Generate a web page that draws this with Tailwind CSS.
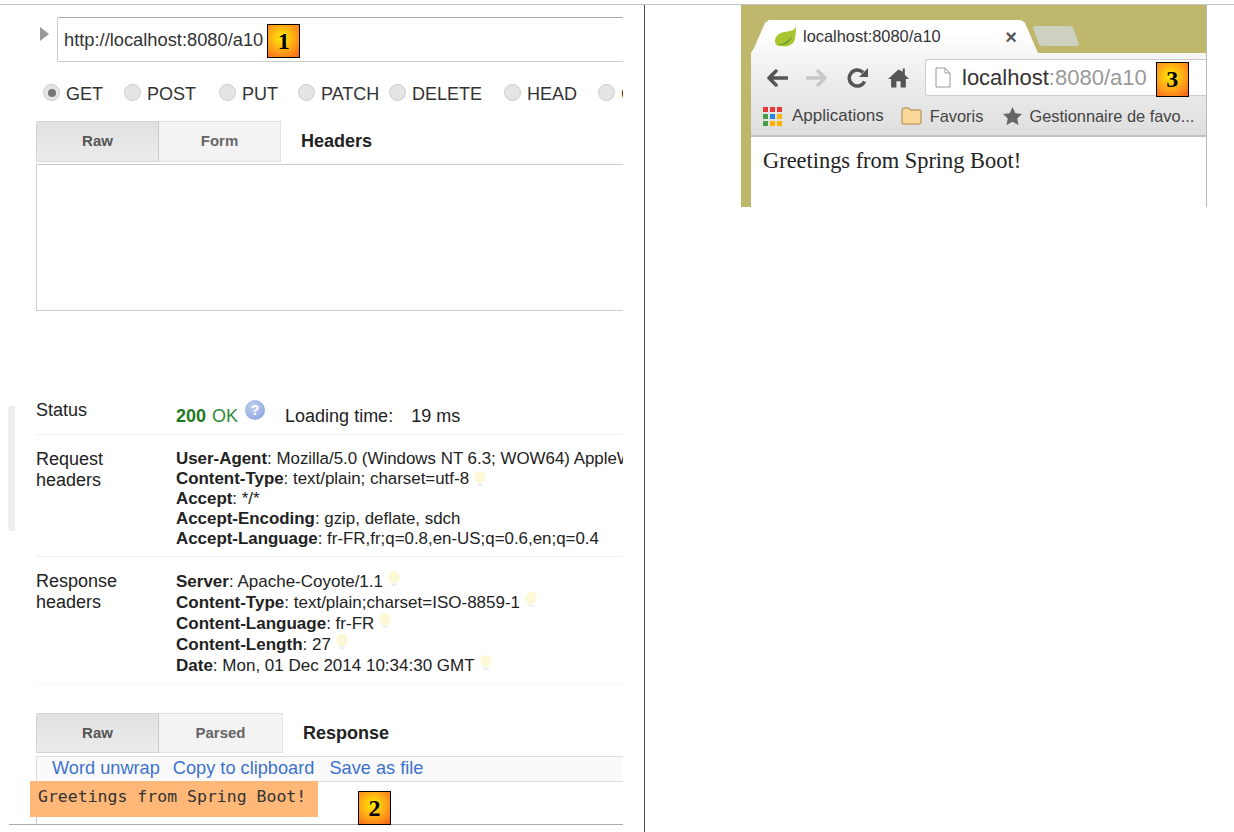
<!DOCTYPE html>
<html lang="en">
<head>
    <meta charset="UTF-8" />
    <title>Spring Boot a10</title>
    <script src="https://cdn.jsdelivr.net/npm/@tailwindcss/browser@4"></script>
</head>
<body class="bg-white h-[832px] w-[1234px] overflow-hidden font-['Liberation_Sans',sans-serif] text-[#222]">
<div class="mt-[4px] border-t border-[#c4c4c4] flex h-[828px]">

    <!-- Left column: REST client -->
    <div class="w-[645px] flex-shrink-0 border-r border-[#555] relative">
        <div class="absolute left-[8px] top-[401px] w-[7px] h-[125px] bg-[#eee] rounded-l-[3px]"></div>

        <div class="ml-[9px] w-[614px] overflow-hidden h-[820px] border-b border-[#aaa] relative">

            <!-- URL row -->
            <div class="flex items-start pl-[31px] pt-[12px]">
                <svg class="w-[9px] h-[14px] mt-[10px] flex-shrink-0" viewBox="0 0 9 14"><path d="M0 0l9 7-9 7z" fill="#999"/></svg>
                <div class="ml-[8px] h-[45px] flex-1 border border-[#ccc] border-t-[#aaa] rounded-l-[2px] flex items-center pl-[6px] -mr-2 text-[18.3px] text-[#333]">
                    <span>http://localhost:8080/a10</span>
                    <span class="ml-[4px] w-[33px] h-[34px] mt-[3px] flex-shrink-0 border border-black bg-[radial-gradient(circle_at_45%_40%,#ffee00,#ff9a1a_60%,#f0601a)] flex items-center justify-center font-['Liberation_Serif',serif] font-bold text-[24px] text-black">1</span>
                </div>
            </div>

            <!-- Method radios -->
            <div class="flex items-center h-[24px] mt-[20px] pl-[34px] text-[18px] text-[#333] whitespace-nowrap">
                <span class="w-[17px] h-[17px] -mt-[3px] flex-shrink-0 rounded-full border border-[#ccc] bg-[#e4e4e4] flex items-center justify-center"><span class="w-[8px] h-[8px] rounded-full bg-[#777]"></span></span>
                <span class="ml-[6px] w-[58px] flex-shrink-0">GET</span>
                <span class="w-[17px] h-[17px] -mt-[3px] flex-shrink-0 rounded-full border border-[#ccc] bg-[#e4e4e4]"></span>
                <span class="ml-[6px] w-[72px] flex-shrink-0">POST</span>
                <span class="w-[17px] h-[17px] -mt-[3px] flex-shrink-0 rounded-full border border-[#ccc] bg-[#e4e4e4]"></span>
                <span class="ml-[6px] w-[56px] flex-shrink-0">PUT</span>
                <span class="w-[17px] h-[17px] -mt-[3px] flex-shrink-0 rounded-full border border-[#ccc] bg-[#e4e4e4]"></span>
                <span class="ml-[6px] w-[68px] flex-shrink-0">PATCH</span>
                <span class="w-[17px] h-[17px] -mt-[3px] flex-shrink-0 rounded-full border border-[#ccc] bg-[#e4e4e4]"></span>
                <span class="ml-[6px] w-[92px] flex-shrink-0">DELETE</span>
                <span class="w-[17px] h-[17px] -mt-[3px] flex-shrink-0 rounded-full border border-[#ccc] bg-[#e4e4e4]"></span>
                <span class="ml-[6px] w-[71px] flex-shrink-0">HEAD</span>
                <span class="w-[17px] h-[17px] -mt-[3px] flex-shrink-0 rounded-full border border-[#ccc] bg-[#e4e4e4]"></span>
                <span class="ml-[6px] flex-shrink-0">OPTIONS</span>
            </div>

            <!-- Request tabs -->
            <div class="flex items-center ml-[27px] mt-[15px] h-[41px]">
                <div class="w-[123px] h-full bg-[linear-gradient(#e0e0e0,#ececec)] border border-[#d4d4d4] border-r-[#c8c8c8] rounded-l-[2px] flex items-center justify-center text-[15px] font-bold text-[#555]">Raw</div>
                <div class="w-[122px] h-full bg-[#f3f3f3] border border-[#e2e2e2] border-l-0 flex items-center justify-center text-[15px] font-bold text-[#666]">Form</div>
                <div class="ml-[20px] text-[18px] font-bold text-[#222]">Headers</div>
            </div>
            <div class="ml-[27px] mt-[2px] h-[147px] border border-[#ccc] border-r-0"></div>

            <!-- Status -->
            <div class="flex ml-[27px] mt-[88px] h-[36px] border-b border-[#f2f2f2] text-[18px]">
                <div class="w-[140px] flex-shrink-0 -mt-[2px]">Status</div>
                <div class="flex items-start pt-[4px] whitespace-nowrap">
                    <span class="font-bold text-[#1f7a1f]">200</span><span class="ml-[6px] text-[#2e8b3a]">OK</span>
                    <span class="ml-[7px] -mt-[3px] w-[20px] h-[20px] rounded-full bg-[radial-gradient(circle_at_40%_35%,#c4d0f0,#7f9bdc)] text-white text-[14px] font-bold flex items-center justify-center">?</span>
                    <span class="ml-[20px]">Loading time:</span>
                    <span class="ml-[18px]">19 ms</span>
                </div>
            </div>

            <!-- Request headers -->
            <div class="flex ml-[27px] mt-[14px] h-[108px] border-b border-[#f2f2f2]">
                <div class="w-[140px] flex-shrink-0 text-[18px] leading-[21px]">Request<br>headers</div>
                <div class="text-[16.9px] leading-[20px] whitespace-nowrap">
                    <div><b>User-Agent</b>: Mozilla/5.0 (Windows NT 6.3; WOW64) AppleWebKit/537.36</div>
                    <div class="flex items-center"><span><b>Content-Type</b>: text/plain; charset=utf-8</span><svg class="ml-[5px] w-[12px] h-[16px]" viewBox="0 0 12 16"><path d="M6 0a6 6 0 0 0-3 11v1h6v-1A6 6 0 0 0 6 0z" fill="#fdf8d6"/><path d="M3.500 12.500h5V15h-5z" fill="#eeeeee"/></svg></div>
                    <div><b>Accept</b>: */*</div>
                    <div><b>Accept-Encoding</b>: gzip, deflate, sdch</div>
                    <div><b>Accept-Language</b>: fr-FR,fr;q=0.8,en-US;q=0.6,en;q=0.4</div>
                </div>
            </div>

            <!-- Response headers -->
            <div class="flex ml-[27px] mt-[14px] h-[113px] border-b border-[#f8f8f8]">
                <div class="w-[140px] flex-shrink-0 text-[18px] leading-[21px]">Response<br>headers</div>
                <div class="text-[17px] leading-[21px] whitespace-nowrap">
                    <div class="flex items-center"><span><b>Server</b>: Apache-Coyote/1.1</span><svg class="ml-[5px] -mt-[5px] w-[12px] h-[16px]" viewBox="0 0 12 16"><path d="M6 0a6 6 0 0 0-3 11v1h6v-1A6 6 0 0 0 6 0z" fill="#fdf8d6"/><path d="M3.500 12.500h5V15h-5z" fill="#eeeeee"/></svg></div>
                    <div class="flex items-center"><span><b>Content-Type</b>: text/plain;charset=ISO-8859-1</span><svg class="ml-[5px] -mt-[5px] w-[12px] h-[16px]" viewBox="0 0 12 16"><path d="M6 0a6 6 0 0 0-3 11v1h6v-1A6 6 0 0 0 6 0z" fill="#fdf8d6"/><path d="M3.500 12.500h5V15h-5z" fill="#eeeeee"/></svg></div>
                    <div class="flex items-center"><span><b>Content-Language</b>: fr-FR</span><svg class="ml-[5px] -mt-[5px] w-[12px] h-[16px]" viewBox="0 0 12 16"><path d="M6 0a6 6 0 0 0-3 11v1h6v-1A6 6 0 0 0 6 0z" fill="#fdf8d6"/><path d="M3.500 12.500h5V15h-5z" fill="#eeeeee"/></svg></div>
                    <div class="flex items-center"><span><b>Content-Length</b>: 27</span><svg class="ml-[5px] -mt-[5px] w-[12px] h-[16px]" viewBox="0 0 12 16"><path d="M6 0a6 6 0 0 0-3 11v1h6v-1A6 6 0 0 0 6 0z" fill="#fdf8d6"/><path d="M3.500 12.500h5V15h-5z" fill="#eeeeee"/></svg></div>
                    <div class="flex items-center"><span><b>Date</b>: Mon, 01 Dec 2014 10:34:30 GMT</span><svg class="ml-[5px] -mt-[5px] w-[12px] h-[16px]" viewBox="0 0 12 16"><path d="M6 0a6 6 0 0 0-3 11v1h6v-1A6 6 0 0 0 6 0z" fill="#fdf8d6"/><path d="M3.500 12.500h5V15h-5z" fill="#eeeeee"/></svg></div>
                </div>
            </div>

            <!-- Response tabs -->
            <div class="flex items-center ml-[27px] mt-[29px] h-[40px]">
                <div class="w-[123px] h-full bg-[linear-gradient(#e0e0e0,#ececec)] border border-[#d4d4d4] border-r-[#c8c8c8] rounded-l-[2px] flex items-center justify-center text-[15px] font-bold text-[#555]">Raw</div>
                <div class="w-[124px] h-full bg-[#f3f3f3] border border-[#e2e2e2] border-l-0 flex items-center justify-center text-[15px] font-bold text-[#666]">Parsed</div>
                <div class="ml-[20px] text-[18px] font-bold text-[#222]">Response</div>
            </div>
            <div class="ml-[27px] mt-[3px] h-[26px] border border-[#ddd] border-r-0 bg-[#fafafa] flex items-center pl-[15px] text-[18.2px] text-[#3d72cc] whitespace-nowrap">
                <span>Word unwrap</span><span class="ml-[13px]">Copy to clipboard</span><span class="ml-[15px]">Save as file</span>
            </div>
            <div class="ml-[27px] h-[60px] border-l border-[#ccc]"></div>
        </div>

        <!-- Highlight and callout sit over the response body -->
        <div class="absolute left-[30px] top-[776px] w-[288px] h-[36px] bg-[#ffb877] pl-[8px] pt-[6px] font-['DejaVu_Sans_Mono',monospace] text-[16.5px] leading-[20px] text-[#333] whitespace-nowrap">Greetings from Spring Boot!</div>
        <div class="absolute left-[358px] top-[786px] w-[33px] h-[34px] border border-black bg-[radial-gradient(circle_at_45%_40%,#ffee00,#ff9a1a_60%,#f0601a)] flex items-center justify-center font-['Liberation_Serif',serif] font-bold text-[24px] text-black">2</div>
    </div>

    <!-- Right column: browser screenshot -->
    <div class="ml-[96px] w-[466px] h-[202px] bg-[#bfb86c] pl-[10px] pt-[15px] border-r border-[#bbb] overflow-hidden flex-shrink-0">
        <div class="flex items-start h-[33px]">
            <div class="w-[287px] h-full bg-[linear-gradient(#fff_40%,#f6f6f6)] [clip-path:polygon(0_100%,3px_28px,14px_3px,18px_0,270px_0,274px_3px,287px_100%)] flex items-center pl-[24px] pr-[21px] text-[16.4px] text-[#333]">
                <svg class="w-[22px] h-[21px] flex-shrink-0" viewBox="0 0 22 21"><path d="M21 0C20 5 15 5 9 6 3 7 0 11 0 15c0 3 2 5 5 5 7 1 14 0 15-8 1-4 1-8 1-12z" fill="#a9c52f"/><path d="M3 19c5-1 11-4 14-9-2 8-8 9-14 9z" fill="#5f9a33"/></svg>
                <span class="ml-[6px] flex-1">localhost:8080/a10</span>
                <span class="font-bold text-[#555] text-[20px]">×</span>
            </div>
            <div class="-ml-[2px] mt-[6px] w-[40px] h-[20px] bg-[#cdd1c2] rounded-[3px] skew-x-[20deg]"></div>
        </div>
        <div class="bg-[linear-gradient(#f6f6f6,#e8e8e8)] h-[44px] flex items-start pt-[6px] pl-[14px]">
            <div class="flex items-center h-[37px] flex-1">
                <svg class="w-[23px] h-[20px] flex-shrink-0" viewBox="0 0 23 20"><path d="M22 10H4M11 3l-7 7 7 7" stroke="#555" stroke-width="3.5" stroke-linecap="round" stroke-linejoin="round" fill="none"/></svg>
                <svg class="ml-[18px] w-[23px] h-[20px] flex-shrink-0" viewBox="0 0 23 20"><path d="M1 10h18M12 3l7 7-7 7" stroke="#c8c8c8" stroke-width="3.5" stroke-linecap="round" stroke-linejoin="round" fill="none"/></svg>
                <svg class="ml-[18px] w-[22px] h-[22px] flex-shrink-0" viewBox="0 0 22 22"><path d="M17.500 14.500a8 8 0 1 1-1.500-9" stroke="#555" stroke-width="3.500" fill="none"/><path d="M21 1v9h-9z" fill="#555"/></svg>
                <svg class="ml-[19px] w-[21px] h-[22px] flex-shrink-0" viewBox="0 0 20 20"><path d="M10 2L0 11h3v8h5v-6h4v6h5v-8h3l-4-4V1h-2v3z" fill="#555"/></svg>
                <div class="ml-[16px] flex-1 h-[37px] bg-white border border-[#ccc] border-r-0 rounded-l-[3px] flex items-center pl-[9px] text-[22px]">
                    <svg class="w-[16px] h-[21px] flex-shrink-0" viewBox="0 0 16 21"><path d="M1 1h9l5 5v14H1z M10 1v5h5" fill="#fff" stroke="#999"/></svg>
                    <span class="ml-[11px] text-[#333]">localhost</span><span class="text-[#999]">:8080/a10</span>
                    <span class="ml-[9px] mt-[3px] w-[33px] h-[35px] flex-shrink-0 border border-black bg-[radial-gradient(circle_at_45%_40%,#ffee00,#ff9a1a_60%,#f0601a)] flex items-center justify-center font-['Liberation_Serif',serif] font-bold text-[24px] text-black">3</span>
                </div>
            </div>
        </div>
        <div class="bg-[linear-gradient(#e8e8e8,#dedede)] h-[40px] border-b-2 border-[#c0c0c0] flex items-center pl-[12px] text-[16.4px] text-[#444] whitespace-nowrap">
            <svg class="w-[19px] h-[19px] flex-shrink-0" viewBox="0 0 19 19"><path d="M0 0h5v5H0zM7 0h5v5H7zM14 0h5v5h-5z" fill="#e53935"/><path d="M0 7h5v5H0z" fill="#43a047"/><path d="M7 7h5v5H7z" fill="#1e88e5"/><path d="M14 7h5v5h-5z" fill="#ffb300"/><path d="M0 14h5v5H0z" fill="#43a047"/><path d="M7 14h5v5H7zM14 14h5v5h-5z" fill="#ffb300"/></svg>
            <span class="ml-[10px] text-[17px]">Applications</span>
            <svg class="ml-[17px] w-[21px] h-[18px] flex-shrink-0" viewBox="0 0 21 18"><path d="M1 3q0-2 2-2h4q2 0 2 2h10q1 0 1 1v12q0 1-1 1H2q-1 0-1-1z" fill="#fbd89a" stroke="#a8853f"/></svg>
            <span class="ml-[8px]">Favoris</span>
            <svg class="ml-[20px] w-[19px] h-[18px] flex-shrink-0" viewBox="0 0 20 19"><path d="M10 0l3 6.500 7 .8-5 4.800 1.300 6.900-6.300-3.400-6.300 3.400L5 12.100 0 7.300l7-.8z" fill="#666"/></svg>
            <span class="ml-[7px]">Gestionnaire de favo...</span>
        </div>
        <div class="bg-white h-[70px] pl-[12px] pt-[10px] font-['Liberation_Serif',serif] text-[22.4px] leading-[27px] text-[#222]">Greetings from Spring Boot!</div>
    </div>
</div>
</body>
</html>
